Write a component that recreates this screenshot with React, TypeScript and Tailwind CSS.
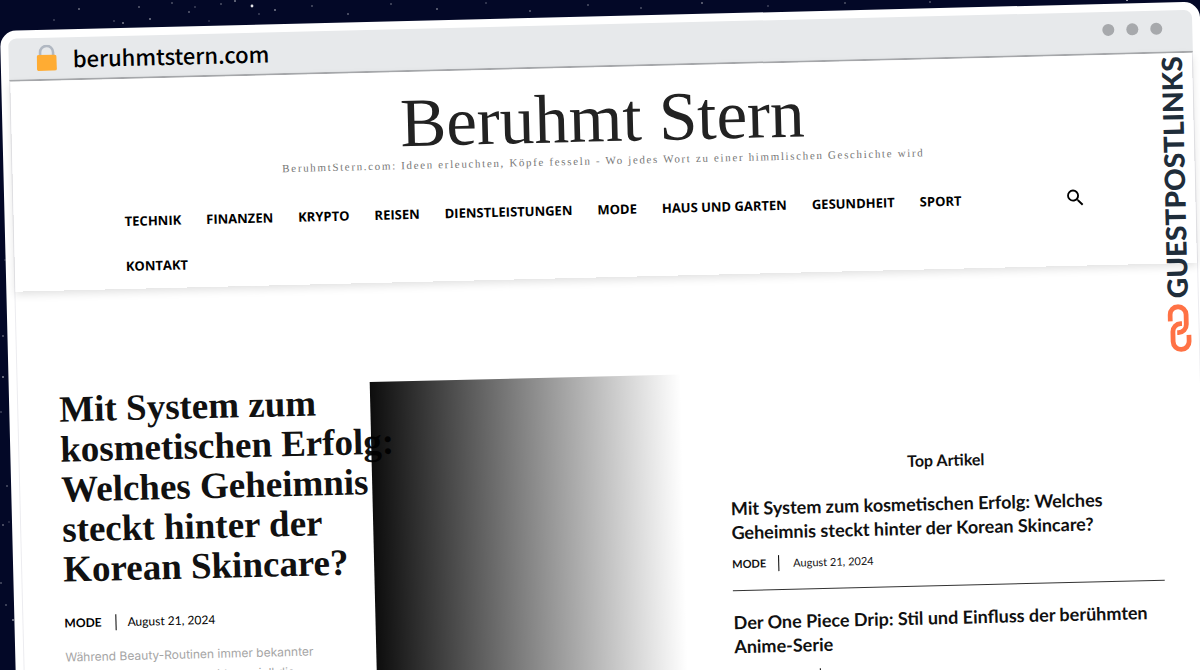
import { MdSearch } from "react-icons/md";

const NAV_ITEMS = [
    "Technik",
    "Finanzen",
    "Krypto",
    "Reisen",
    "Dienstleistungen",
    "Mode",
    "Haus und Garten",
    "Gesundheit",
    "Sport",
    "Kontakt",
];

const TOP_ARTICLES = [
    {
        title: "Mit System zum kosmetischen Erfolg: Welches Geheimnis steckt hinter der Korean Skincare?",
        category: "Mode",
        date: "August 21, 2024",
    },
    {
        title: "Der One Piece Drip: Stil und Einfluss der berühmten Anime-Serie",
        category: "Prominente",
        date: "July 8, 2024",
    },
];

// x, y, radius, opacity
const STARS = [
    [79, 9, 0.8, 0.7], [54, 20, 0.8, 0.4], [114, 21, 0.8, 0.4], [123, 23, 0.8, 0.8], [150, 19, 0.8, 0.8],
    [139, 7, 0.8, 0.6], [172, 3, 0.8, 0.5], [189, 12, 0.8, 0.6], [195, 7, 0.8, 0.4], [221, 4, 0.8, 0.5],
    [235, 1, 0.8, 0.8], [252, 6, 1.4, 0.9], [259, 14, 0.8, 0.4], [275, 10, 0.8, 0.8], [209, 21, 0.8, 0.3],
    [312, 6, 0.8, 0.5], [348, 14, 0.8, 0.6], [391, 4, 0.8, 0.5], [437, 9, 0.8, 0.7], [486, 3, 0.8, 0.4],
    [530, 11, 0.8, 0.6], [588, 5, 0.8, 0.5], [641, 8, 0.8, 0.5], [702, 3, 0.8, 0.7], [768, 6, 0.8, 0.4],
    [845, 3, 0.8, 0.5], [930, 2, 0.8, 0.5], [1127, 0, 1, 0.8],
    [5, 260, 0.8, 0.3], [3, 336, 0.8, 0.6], [3, 377, 0.8, 0.9], [1, 412, 0.8, 0.4], [7, 486, 0.8, 0.5],
    [3, 525, 0.8, 0.6], [9, 522, 0.8, 0.3], [1, 583, 0.8, 0.5], [6, 605, 0.8, 0.5], [13, 620, 0.8, 0.9],
];

function StarField() {
    return (
        <svg className="absolute inset-0 h-full w-full" aria-hidden="true">
            {STARS.map(([x, y, r, o], idx) => (
                <circle key={idx} cx={x} cy={y} r={r} fill="#fff" opacity={o} />
            ))}
        </svg>
    );
}

function LockIcon() {
    return (
        <svg viewBox="0 0 20 26" className="h-[26px] w-5" aria-hidden="true">
            <path d="M3.5 12V7.5a6.5 6.5 0 0 1 13 0V12" fill="none" stroke="#b1b8c2" strokeWidth="2.6" />
            <rect y="10" width="20" height="16" rx="2" fill="#ffac33" />
        </svg>
    );
}

function LinkMark() {
    return (
        <svg viewBox="0 0 24 48" className="h-12 w-6" fill="none" stroke="#ff7245" strokeWidth="4.8" aria-hidden="true">
            <path d="M2.8 17V10.6a8 8 0 0 1 16 0V20.5a8 8 0 0 1-8 8H9.5" />
            <path d="M21.2 31V37.4a8 8 0 0 1-16 0V27.5a8 8 0 0 1 8-8H14.5" />
        </svg>
    );
}

function BrowserBar() {
    return (
        <div className="flex h-[43px] items-center justify-between rounded-t-lg border-b-2 border-[#a9abae] bg-[#e7e9eb] pr-[30px] pb-px pl-7">
            <div className="flex items-center gap-4">
                <LockIcon />
                <span className="font-['Noto_Sans_CJK_JP',sans-serif] text-[22px] leading-8 font-medium text-black">
                    beruhmtstern.com
                </span>
            </div>
            <div className="flex gap-3 pb-1">
                <span className="size-3 rounded-full bg-[#a7a9ac]" />
                <span className="size-3 rounded-full bg-[#a7a9ac]" />
                <span className="size-3 rounded-full bg-[#a7a9ac]" />
            </div>
        </div>
    );
}

function SiteHeader() {
    return (
        <header className="shadow-[0_3px_8px_rgba(0,0,0,0.12)]">
            <div className="pt-[17px] text-center font-['Liberation_Serif',serif]">
                <h1 className="text-[69px] leading-[69px] text-[#222]">Beruhmt Stern</h1>
                <p className="text-[11px] leading-[14px] tracking-[0.15em] text-[#777]">
                    BeruhmtStern.com: Ideen erleuchten, Köpfe fesseln - Wo jedes Wort zu einer himmlischen Geschichte wird
                </p>
            </div>
            <div className="mt-5 flex items-start justify-between pr-[109px] pl-[111px]">
                <nav className="flex max-w-[880px] flex-wrap gap-x-[25px]">
                    {NAV_ITEMS.map((item) => (
                        <a
                            key={item}
                            href="#"
                            className="font-['Open_Sans',sans-serif] text-[13px] leading-[45px] font-bold text-black uppercase"
                        >
                            {item}
                        </a>
                    ))}
                </nav>
                <button type="button" aria-label="Suche" className="flex h-11 items-center text-black">
                    <MdSearch className="size-[22px]" />
                </button>
            </div>
        </header>
    );
}

function LeadStory() {
    return (
        <article className="flex">
            <div className="w-[311px] shrink-0">
                <h2 className="w-[350px] font-['Liberation_Serif',serif] text-[37px] leading-10 font-bold text-[#111]">
                    Mit System zum kosmetischen Erfolg: Welches Geheimnis steckt hinter der Korean Skincare?
                </h2>
                <div className="mt-6 flex items-center font-['Lato',sans-serif] text-xs leading-5 text-black">
                    <a href="#" className="font-bold">MODE</a>
                    <span className="mr-[11px] ml-[14px] h-4 w-px bg-black" />
                    <time>August 21, 2024</time>
                </div>
                <p className="mt-[14px] w-[270px] font-['Inter',sans-serif] text-xs leading-5 text-[#a5a5a5]">
                    Während Beauty-Routinen immer bekannter und beliebter werden, macht speziell die
                </p>
            </div>
            <div className="z-10 h-[480px] w-[311px] shrink-0 bg-linear-to-r from-black/95 to-transparent" />
        </article>
    );
}

function TopArticles() {
    return (
        <section className="w-[432px] pt-20 font-['Lato',sans-serif] text-[#111]">
            <h2 className="text-center text-base leading-6 font-bold">Top Artikel</h2>
            {TOP_ARTICLES.map((article) => (
                <article key={article.title} className="border-b border-[#333] pt-[19px] pb-[18px]">
                    <h3 className="text-lg leading-6 font-bold">{article.title}</h3>
                    <div className="mt-3 flex items-center text-[11px] leading-4">
                        <a href="#" className="font-bold uppercase">{article.category}</a>
                        <span className="mr-[14px] ml-3 h-4 w-px bg-black" />
                        <time>{article.date}</time>
                    </div>
                </article>
            ))}
        </section>
    );
}

function SideBrand() {
    return (
        <a
            href="#"
            className="absolute top-[54px] right-4 flex rotate-180 flex-row-reverse items-end gap-[6px] [writing-mode:vertical-rl]"
        >
            <span className="font-['Lato',sans-serif] text-[28px] leading-7 font-black text-[#1f2d3a]">GUESTPOSTLINKS</span>
            <LinkMark />
        </a>
    );
}

export default function App() {
    return (
        <div className="relative h-screen overflow-hidden bg-[#030827] pt-[31px]">
            <StarField />
            <div className="relative min-h-full origin-top-left -rotate-[1.4deg] rounded-t-2xl bg-white p-2">
                <BrowserBar />
                <main className="border-x border-[#ececf0]">
                    <SiteHeader />
                    <div className="flex justify-between pt-[99px] pr-10 pl-[41px]">
                        <LeadStory />
                        <TopArticles />
                    </div>
                </main>
                <SideBrand />
            </div>
        </div>
    );
}
